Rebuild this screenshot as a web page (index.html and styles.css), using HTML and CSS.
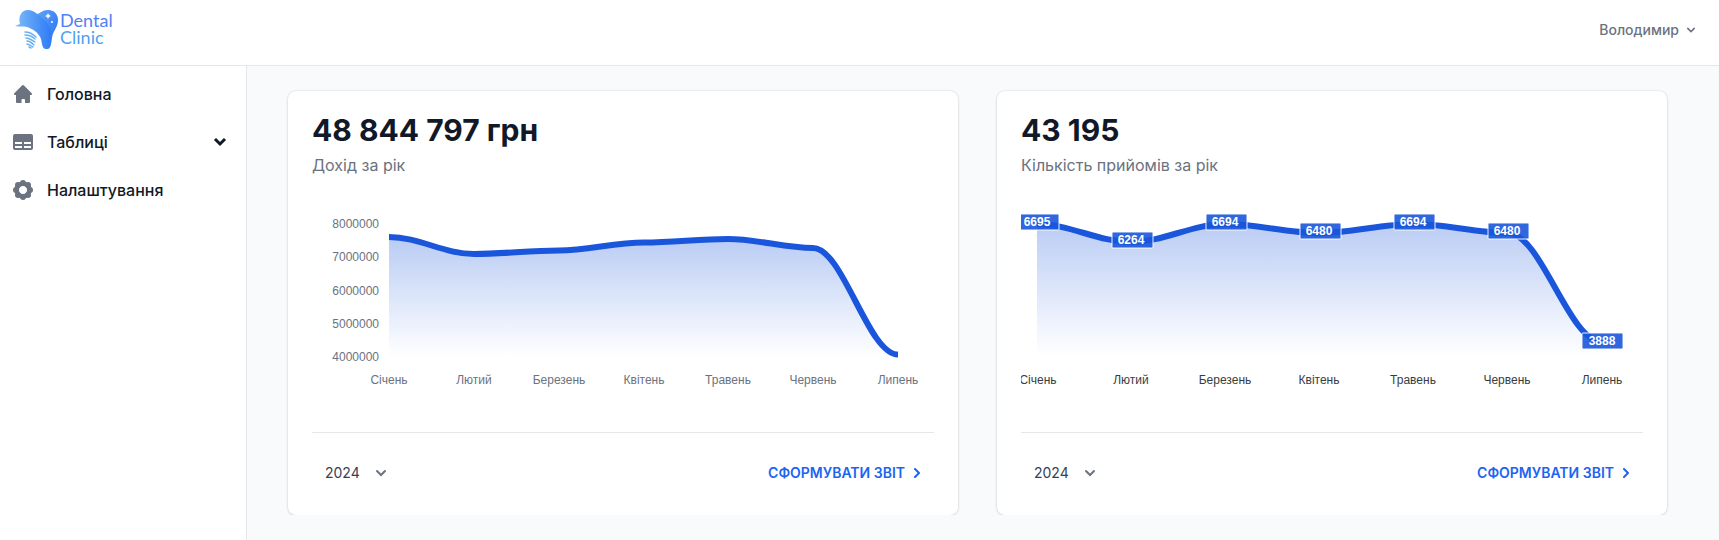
FILE: index.html
```html
<!DOCTYPE html>
<html lang="uk">
<head>
<meta charset="utf-8">
<meta name="viewport" content="width=device-width, initial-scale=1">
<title>Dental Clinic</title>
<link rel="stylesheet" href="styles.css">
</head>
<body>
<header class="topbar">
  <a class="brand" href="#" aria-label="Dental Clinic">
    <svg class="brand-mark" viewBox="0 0 44 42" aria-hidden="true">
      <defs>
        <linearGradient id="tooth-light" x1="0" y1="0" x2="1" y2="0"><stop offset="0" stop-color="#7cbdf6"/><stop offset="1" stop-color="#2f7bf7"/></linearGradient>
        <linearGradient id="tooth-dark" x1="0" y1="0" x2="1" y2="1"><stop offset="0" stop-color="#5ea5f6"/><stop offset="1" stop-color="#256df8"/></linearGradient>
      </defs>
      <path fill="url(#tooth-dark)" d="M22 6C26 5 27 2 33 2C39 2 43 6 43 12C43 20 38 22 37 30C36 36 36 41 32 41C29 41 28 32 27 28Z"/>
      <path fill="url(#tooth-light)" d="M0 18L5 16C3 9 6 2 13 2C19 2 22 6 26 9C33 14 37 21 36 30C35 36 35 41 31 41C27 41 27 35 26 31C24 25 18 21 12 19C8 18 5 19 0 18Z"/>
      <path fill="none" stroke="#67aff5" stroke-width="1.400" stroke-linecap="round" d="M10 24C14 24 18 26 21 29M10 27C14 27 18 29 20 31M11 30C14 30 17 32 20 34M12 33C14 33 17 35 19 37M12 36C14 36 16 38 18 39M14 39L16 40"/>
      <path fill="#fff" d="M33 5L34 7L36 8L34 9L33 11L32 9L30 8L32 7Z"/>
      <circle cx="37" cy="14" r="1" fill="#fff"/>
    </svg>
    <span class="brand-name"><span class="brand-top">Dental</span><span class="brand-bottom">Clinic</span></span>
  </a>
  <button class="user" type="button">Володимир
    <svg class="icon-16" viewBox="0 0 20 20" fill="currentColor" aria-hidden="true"><path fill-rule="evenodd" d="M5.293 7.293a1 1 0 011.414 0L10 10.586l3.293-3.293a1 1 0 111.414 1.414l-4 4a1 1 0 01-1.414 0l-4-4a1 1 0 010-1.414z"/></svg>
  </button>
</header>

<div class="shell">
  <nav class="sidebar" aria-label="Меню">
    <a class="nav-item" href="#">
      <svg class="nav-icon" viewBox="0 0 20 20" fill="currentColor" aria-hidden="true"><path d="M9.300 1.300a1 1 0 0 1 1.400 0l8 8A1 1 0 0 1 18 11h-1v7a1 1 0 0 1-1 1h-4v-3a1 1 0 0 0-1-1H9.500a1 1 0 0 0-1 1v3H4a1 1 0 0 1-1-1v-7H2a1 1 0 0 1-.7-1.700z"/></svg>
      <span>Головна</span>
    </a>
    <button class="nav-item" type="button">
      <svg class="nav-icon" viewBox="0 0 20 20" aria-hidden="true"><rect y="2" width="20" height="16" rx="2" fill="currentColor"/><path stroke="#fff" stroke-width="2" d="M2 11h7M11 11h7M2 15h7M11 15h7"/></svg>
      <span>Таблиці</span>
      <svg class="nav-arrow" viewBox="0 0 24 24" fill="none" aria-hidden="true"><path stroke="currentColor" stroke-width="3" d="M7 9l5 5 5-5"/></svg>
    </button>
    <a class="nav-item" href="#">
      <svg class="nav-icon" viewBox="0 0 20 20" aria-hidden="true"><circle cx="10" cy="10" r="6.300" fill="none" stroke="currentColor" stroke-width="4.600"/><g fill="currentColor"><circle cx="10" cy="3" r="3"/><circle cx="15" cy="5" r="3"/><circle cx="17" cy="10" r="3"/><circle cx="15" cy="15" r="3"/><circle cx="10" cy="17" r="3"/><circle cx="5" cy="15" r="3"/><circle cx="3" cy="10" r="3"/><circle cx="5" cy="5" r="3"/></g></svg>
      <span>Налаштування</span>
    </a>
  </nav>

  <main class="content">
    <div class="cards">
      <section class="card">
        <h2 class="card-value">48 844 797 грн</h2>
        <p class="card-label">Дохід за рік</p>
        <svg class="chart chart-muted" viewBox="0 0 622 200" role="img" aria-label="Дохід за рік">
          <defs><linearGradient id="fill-income" gradientUnits="userSpaceOnUse" x1="0" y1="39" x2="0" y2="157"><stop offset="0" stop-color="#1a56db" stop-opacity=".3"/><stop offset="1" stop-color="#1a56db" stop-opacity="0"/></linearGradient></defs>
          <path fill="url(#fill-income)" d="M77 37C107 37 132 54 162 54C191 54 217 50.500 247 50.500C276 50.500 302 42.500 332 42.500C361 42.500 387 39 416 39C446 39 472 48 501 48C531 48 556 154.500 586 154.500V157H77Z"/>
          <path class="line" d="M77 37C107 37 132 54 162 54C191 54 217 50.500 247 50.500C276 50.500 302 42.500 332 42.500C361 42.500 387 39 416 39C446 39 472 48 501 48C531 48 556 154.500 586 154.500"/>
          <g text-anchor="end"><text x="67" y="28">8000000</text><text x="67" y="61">7000000</text><text x="67" y="95">6000000</text><text x="67" y="128">5000000</text><text x="67" y="161">4000000</text></g>
          <g text-anchor="middle"><text x="77" y="184">Січень</text><text x="162" y="184">Лютий</text><text x="247" y="184">Березень</text><text x="332" y="184">Квітень</text><text x="416" y="184">Травень</text><text x="501" y="184">Червень</text><text x="586" y="184">Липень</text></g>
        </svg>
        <div class="card-footer">
          <select class="year" aria-label="Рік"><option>2024</option></select>
          <a class="report" href="#">Сформувати звіт
            <svg class="report-arrow" viewBox="0 0 6 10" fill="none" aria-hidden="true"><path stroke="currentColor" stroke-width="2" stroke-linecap="round" stroke-linejoin="round" d="M1 9l4-4-4-4"/></svg>
          </a>
        </div>
      </section>

      <section class="card">
        <h2 class="card-value">43 195</h2>
        <p class="card-label">Кількість прийомів за рік</p>
        <svg class="chart" viewBox="0 0 622 200" role="img" aria-label="Кількість прийомів за рік">
          <defs><linearGradient id="fill-visits" gradientUnits="userSpaceOnUse" x1="0" y1="23" x2="0" y2="157"><stop offset="0" stop-color="#1a56db" stop-opacity=".3"/><stop offset="1" stop-color="#1a56db" stop-opacity="0"/></linearGradient></defs>
          <path fill="url(#fill-visits)" d="M16 24C49 24 77 42 110 42C143 42 171 24 204 24C237 24 265 33 298 33C331 33 360 24 393 24C426 24 454 33 487 33C520 33 548 142 581 142V157H16Z"/>
          <path class="line" d="M16 24C49 24 77 42 110 42C143 42 171 24 204 24C237 24 265 33 298 33C331 33 360 24 393 24C426 24 454 33 487 33C520 33 548 142 581 142"/>
          <g class="tag-box"><rect x="-3" y="14" width="41" height="16" rx="1"/><rect x="91" y="32" width="41" height="16" rx="1"/><rect x="185" y="14" width="41" height="16" rx="1"/><rect x="279" y="23" width="41" height="16" rx="1"/><rect x="373" y="14" width="41" height="16" rx="1"/><rect x="467" y="23" width="41" height="16" rx="1"/><rect x="561" y="133" width="41" height="16" rx="1"/></g>
          <g class="tag-text" text-anchor="middle"><text x="16" y="26">6695</text><text x="110" y="44">6264</text><text x="204" y="26">6694</text><text x="298" y="35">6480</text><text x="392" y="26">6694</text><text x="486" y="35">6480</text><text x="581" y="145">3888</text></g>
          <g text-anchor="middle"><text x="17" y="184">Січень</text><text x="110" y="184">Лютий</text><text x="204" y="184">Березень</text><text x="298" y="184">Квітень</text><text x="392" y="184">Травень</text><text x="486" y="184">Червень</text><text x="581" y="184">Липень</text></g>
        </svg>
        <div class="card-footer">
          <select class="year" aria-label="Рік"><option>2024</option></select>
          <a class="report" href="#">Сформувати звіт
            <svg class="report-arrow" viewBox="0 0 6 10" fill="none" aria-hidden="true"><path stroke="currentColor" stroke-width="2" stroke-linecap="round" stroke-linejoin="round" d="M1 9l4-4-4-4"/></svg>
          </a>
        </div>
      </section>
    </div>
  </main>
</div>
</body>
</html>
```
FILE: styles.css
```css
* { box-sizing: border-box; }

body {
  margin: 0;
  min-height: 100vh;
  display: flex;
  flex-direction: column;
  background: #f9fafb;
  color: #111827;
  font: 16px/24px Inter, sans-serif;
}

a { color: inherit; text-decoration: none; }

button, select {
  border: 0;
  background: none;
  color: inherit;
  font: inherit;
  cursor: pointer;
}

.topbar {
  display: flex;
  justify-content: space-between;
  align-items: flex-start;
  padding: 8px 20px 8px 15px;
  min-height: 66px;
  background: #fff;
  border-bottom: 1px solid #e5e7eb;
}

.brand { display: flex; align-items: center; gap: 1px; }
.brand-mark { width: 44px; height: 42px; }
.brand-name {
  display: flex;
  flex-direction: column;
  font: 18px/17px Lato, sans-serif;
}
.brand-top { color: #5180f5; }
.brand-bottom { color: #4f9ff5; }

.user {
  display: flex;
  align-items: center;
  gap: 4px;
  padding: 12px 0;
  color: #6b7280;
  font-size: 14px;
  font-weight: 500;
  line-height: 20px;
}
.icon-16 { width: 16px; height: 16px; }

.shell { display: flex; flex: 1; }

.sidebar {
  display: flex;
  flex-direction: column;
  flex: none;
  gap: 8px;
  width: 247px;
  padding: 8px 12px;
  background: #fff;
  border-right: 1px solid #e5e7eb;
}

.nav-item {
  display: flex;
  align-items: center;
  gap: 14px;
  padding: 8px 2px 8px 1px;
  font-weight: 500;
  text-align: left;
}
.nav-icon { width: 20px; height: 20px; color: #6b7280; }
.nav-arrow { width: 24px; height: 24px; margin-left: auto; }

.content { flex: 1; min-width: 0; }

.cards {
  display: grid;
  grid-template-columns: 1fr 1fr;
  gap: 39px;
  padding: 25px 52px 0 41px;
  overflow: hidden;
}

.card {
  padding: 24px;
  background: #fff;
  border-radius: 8px;
  box-shadow: 0 1px 3px rgba(0, 0, 0, .1), 0 0 2px rgba(0, 0, 0, .16);
}

.card-value {
  margin: 0 0 8px;
  font-size: 30px;
  font-weight: 700;
  line-height: 30px;
}
.card-label { margin: 0; color: #6b7280; }

.chart {
  display: block;
  width: 100%;
  margin: 23px 0 32px;
  fill: #373d3f;
  font: 12px "Liberation Sans", Arial, sans-serif;
}
.chart-muted { fill: #6b7280; }
.line { fill: none; stroke: #1a56db; stroke-width: 6; }
.tag-box { fill: #1a56db; fill-opacity: .9; stroke: #fff; stroke-opacity: .9; }
.tag-text { fill: #fff; font-weight: 600; }

.card-footer {
  display: flex;
  justify-content: space-between;
  align-items: center;
  padding: 22px 14px 0 9px;
  border-top: 1px solid #e5e7eb;
}

.year {
  appearance: none;
  width: 76px;
  padding: 8px 4px;
  color: #374151;
  font-size: 14px;
  line-height: 20px;
  background: url("data:image/svg+xml,%3Csvg xmlns='http://www.w3.org/2000/svg' viewBox='0 0 12 8' fill='none'%3E%3Cpath stroke='%236b7280' stroke-width='2' stroke-linecap='round' d='M2 2l4 4 4-4'/%3E%3C/svg%3E") no-repeat right 10px center / 12px 8px;
}

.report {
  display: flex;
  align-items: center;
  gap: 9px;
  color: #1c64f2;
  font-size: 14px;
  font-weight: 600;
  line-height: 20px;
  text-transform: uppercase;
}
.report-arrow { width: 6px; height: 10px; }
```
